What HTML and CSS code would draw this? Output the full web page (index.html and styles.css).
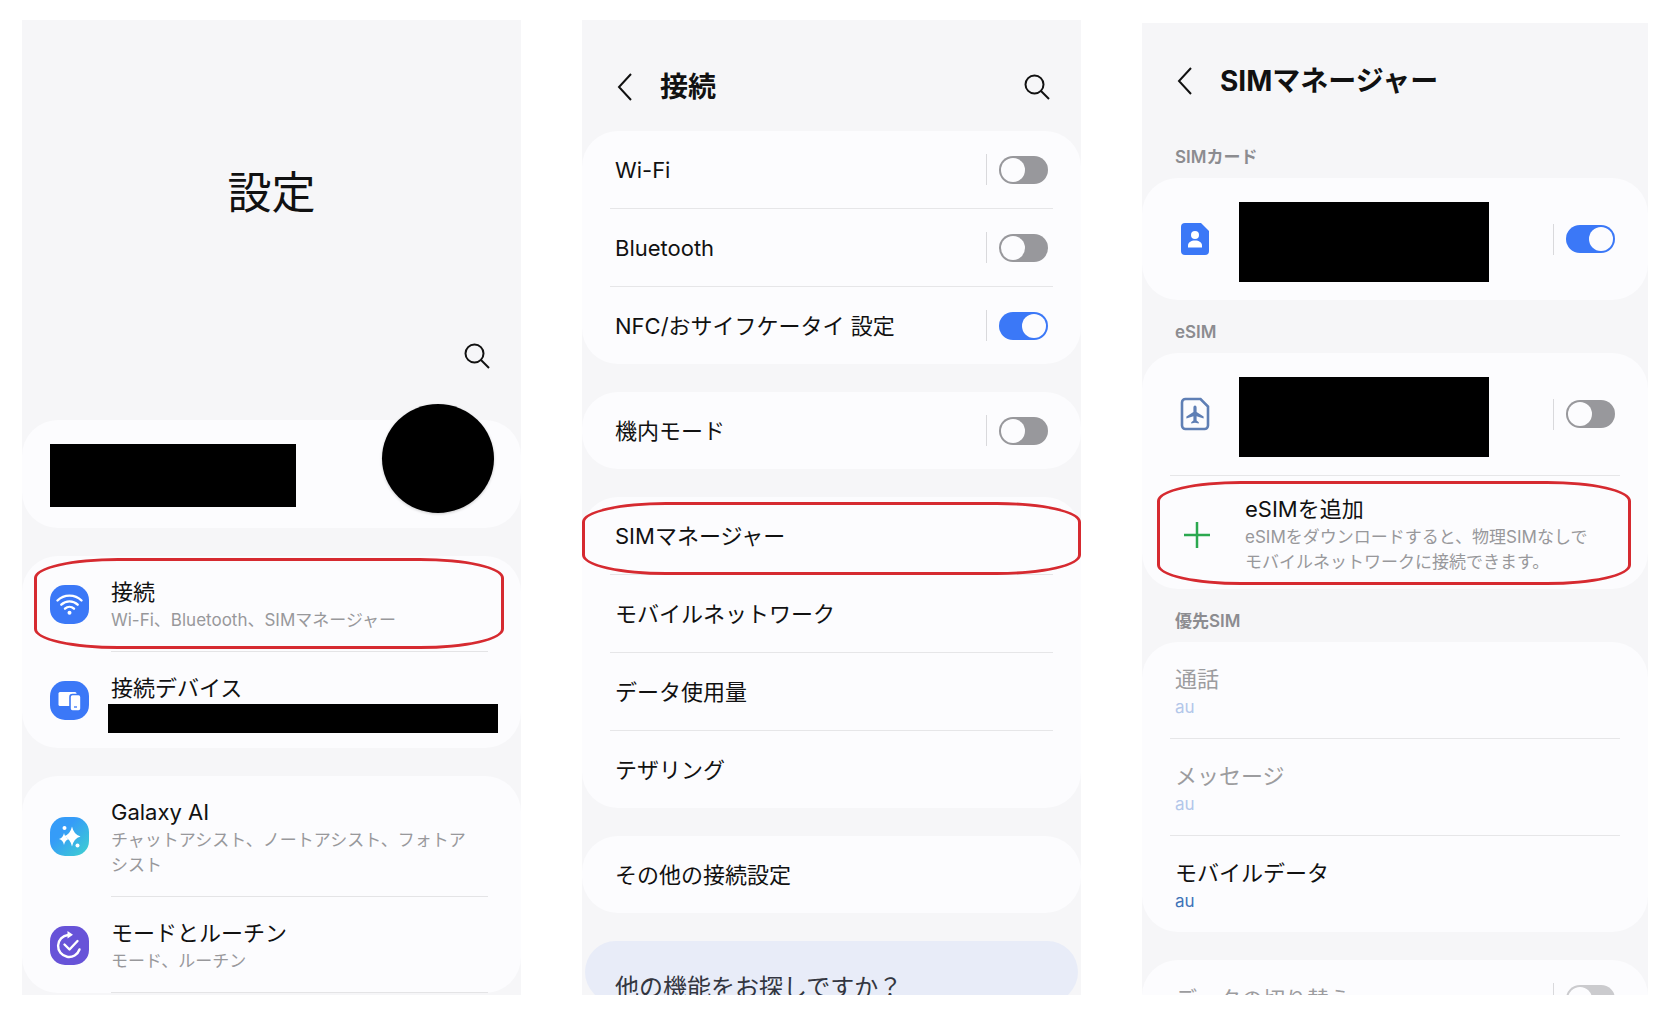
FILE: index.html
```html
<!DOCTYPE html>
<html lang="ja">
<head>
    <meta charset="UTF-8">
    <meta name="viewport" content="width=device-width, initial-scale=1">
    <title>eSIMの追加手順</title>
    <link rel="stylesheet" href="styles.css">
</head>
<body>
    <main class="steps">

        <!-- 設定 -->
        <section class="phone">
            <header class="hero">
                <h1>設定</h1>
                <button class="icon-btn" type="button" aria-label="検索">
                    <svg viewBox="0 0 28 28" width="28" height="28"><circle cx="11.500" cy="11.500" r="9" /><path d="M18 18l8 8" /></svg>
                </button>
            </header>

            <div class="card account">
                <div class="mask mask-name"></div>
                <div class="mask-avatar"></div>
            </div>

            <div class="card">
                <div class="item highlight mark-connect">
                    <svg class="app-icon" viewBox="0 0 39 39">
                        <rect width="39" height="39" rx="15" fill="#3b78f7" />
                        <g fill="none" stroke="#fff" stroke-width="2.400" stroke-linecap="round">
                            <path d="M7.500 15.500C14 9 25 9 31.500 15.500" />
                            <path d="M11.300 19.700c4.600-4.500 11.800-4.500 16.400 0" />
                            <path d="M15 23.700c2.600-2.500 6.400-2.500 9 0" />
                        </g>
                        <circle cx="19.500" cy="27.700" r="2" fill="#fff" />
                    </svg>
                    <div class="item-text">
                        <h3>接続</h3>
                        <p>Wi-Fi、Bluetooth、SIMマネージャー</p>
                    </div>
                </div>
                <div class="item item-device">
                    <svg class="app-icon" viewBox="0 0 39 39">
                        <rect width="39" height="39" rx="15" fill="#3b78f7" />
                        <rect x="8.500" y="11" width="18" height="14" rx="1.500" fill="#fff" />
                        <rect x="20" y="13.500" width="11" height="16.500" rx="2.500" fill="#fff" stroke="#3b78f7" stroke-width="1.600" />
                        <path d="M24 26h3" stroke="#3b78f7" stroke-width="1.300" />
                    </svg>
                    <div class="item-text">
                        <h3>接続デバイス</h3>
                        <div class="mask mask-device"></div>
                    </div>
                </div>
            </div>

            <div class="card">
                <div class="item">
                    <svg class="app-icon" viewBox="0 0 39 39">
                        <defs>
                            <linearGradient id="ai" x1="0" y1="0" x2="1" y2="1">
                                <stop offset="0.350" stop-color="#359cf8" />
                                <stop offset="1" stop-color="#3fd2cf" />
                            </linearGradient>
                        </defs>
                        <rect width="39" height="39" rx="15" fill="url(#ai)" />
                        <g fill="#fff">
                            <path d="M22 9.500q1.800 8.200 8.500 10-6.700 1.800-8.500 10-1.800-8.200-8.500-10 6.700-1.800 8.500-10z" />
                            <path d="M14 16q1 5 5 6-4 1-5 6-1-5-5-6 4-1 5-6z" />
                            <circle cx="14.500" cy="11" r="2" />
                            <circle cx="27.500" cy="28.500" r="2" />
                        </g>
                    </svg>
                    <div class="item-text">
                        <h3>Galaxy AI</h3>
                        <p>チャットアシスト、ノートアシスト、フォトアシスト</p>
                    </div>
                </div>
                <div class="item">
                    <svg class="app-icon" viewBox="0 0 39 39">
                        <rect width="39" height="39" rx="15" fill="#6753d8" />
                        <g fill="none" stroke="#fff" stroke-width="2.400" stroke-linecap="round" stroke-linejoin="round">
                            <path d="M29.500 23.500A11 11 0 1 1 18 9" />
                            <path d="M14.500 18.500l5 5 8-8.500" />
                        </g>
                        <path d="M17.500 5l5.500 3.800-5.500 3.700z" fill="#fff" />
                    </svg>
                    <div class="item-text">
                        <h3>モードとルーチン</h3>
                        <p>モード、ルーチン</p>
                    </div>
                </div>
            </div>
        </section>

        <!-- 接続 -->
        <section class="phone">
            <header class="bar">
                <button class="icon-btn" type="button" aria-label="戻る">
                    <svg viewBox="0 0 28 28" width="28" height="28"><path d="M21 1L9 14l12 13" /></svg>
                </button>
                <h2>接続</h2>
                <button class="icon-btn" type="button" aria-label="検索">
                    <svg viewBox="0 0 28 28" width="28" height="28"><circle cx="11.500" cy="11.500" r="9" /><path d="M18 18l8 8" /></svg>
                </button>
            </header>

            <div class="card">
                <div class="row">
                    <label for="wifi">Wi-Fi</label>
                    <span class="switch"><input type="checkbox" id="wifi"></span>
                </div>
                <div class="row">
                    <label for="bluetooth">Bluetooth</label>
                    <span class="switch"><input type="checkbox" id="bluetooth"></span>
                </div>
                <div class="row">
                    <label for="nfc">NFC/おサイフケータイ 設定</label>
                    <span class="switch"><input type="checkbox" id="nfc" checked></span>
                </div>
            </div>

            <div class="card">
                <div class="row">
                    <label for="airplane">機内モード</label>
                    <span class="switch"><input type="checkbox" id="airplane"></span>
                </div>
            </div>

            <div class="card">
                <div class="row highlight mark-manager">SIMマネージャー</div>
                <div class="row">モバイルネットワーク</div>
                <div class="row">データ使用量</div>
                <div class="row">テザリング</div>
            </div>

            <div class="card">
                <div class="row">その他の接続設定</div>
            </div>

            <div class="card suggest">
                <p>他の機能をお探しですか？</p>
            </div>
        </section>

        <!-- SIMマネージャー -->
        <section class="phone phone-sim">
            <header class="bar">
                <button class="icon-btn" type="button" aria-label="戻る">
                    <svg viewBox="0 0 28 28" width="28" height="28"><path d="M21 1L9 14l12 13" /></svg>
                </button>
                <h2>SIMマネージャー</h2>
            </header>

            <h4>SIMカード</h4>
            <div class="card">
                <div class="row row-sim">
                    <svg class="sim-icon" viewBox="0 0 30 34">
                        <path d="M5 1h16l8 8v20a4 4 0 0 1-4 4H5a4 4 0 0 1-4-4V5a4 4 0 0 1 4-4z" fill="#3b78f7" />
                        <circle cx="15" cy="13" r="4" fill="#fff" />
                        <path d="M8 25.500v-2c0-3 3-5 7-5s7 2 7 5v2z" fill="#fff" />
                    </svg>
                    <div class="mask mask-sim"></div>
                    <span class="switch"><input type="checkbox" aria-label="SIMカード" checked></span>
                </div>
            </div>

            <h4>eSIM</h4>
            <div class="card">
                <div class="row row-sim">
                    <svg class="sim-icon" viewBox="0 0 30 34">
                        <path d="M5.500 2h15l7.500 7.500V28.500a3.500 3.500 0 0 1-3.500 3.500h-19A3.500 3.500 0 0 1 2 28.500v-23A3.500 3.500 0 0 1 5.500 2z" fill="none" stroke="#5f7fb5" stroke-width="2.600" />
                        <path d="M15 8.500c1.100 0 1.600 1 1.600 2.200v4.300l7 4.400v2l-7-2.100v4.200l2.200 1.700v1.400L15 25.700l-3.800.9v-1.400l2.200-1.700v-4.200l-7 2.100v-2l7-4.400v-4.300c0-1.200.5-2.200 1.600-2.200z" fill="#5f7fb5" />
                    </svg>
                    <div class="mask mask-sim"></div>
                    <span class="switch"><input type="checkbox" aria-label="eSIM"></span>
                </div>
                <div class="row row-add highlight mark-add">
                    <svg class="plus" viewBox="0 0 26 26"><path d="M13 0v26M0 13h26" stroke="#2ba84f" stroke-width="2.500" /></svg>
                    <div>
                        <h3>eSIMを追加</h3>
                        <p>eSIMをダウンロードすると、物理SIMなしでモバイルネットワークに接続できます。</p>
                    </div>
                </div>
            </div>

            <h4>優先SIM</h4>
            <div class="card">
                <div class="row row-pref disabled">
                    <h3>通話</h3>
                    <p>au</p>
                </div>
                <div class="row row-pref disabled">
                    <h3>メッセージ</h3>
                    <p>au</p>
                </div>
                <div class="row row-pref">
                    <h3>モバイルデータ</h3>
                    <p>au</p>
                </div>
            </div>

            <div class="card">
                <div class="row disabled">
                    <label for="data-switch">データの切り替え</label>
                    <span class="switch"><input type="checkbox" id="data-switch" disabled></span>
                </div>
            </div>
        </section>

    </main>
</body>
</html>
```
FILE: styles.css
```css
* {
    box-sizing: border-box;
}
body {
    margin: 0;
    background: #fff;
    color: #111;
    font-family: Inter, "Noto Sans CJK JP", sans-serif;
    font-size: 22px;
    line-height: 30px;
}
h1, h2, h3, h4, p {
    margin: 0;
}
h3 {
    margin-bottom: 1px;
    font-size: 22px;
    font-weight: 400;
}
p {
    color: #98989b;
    font-size: 17px;
    line-height: 25px;
}
.steps {
    display: grid;
    grid-template-columns: 499fr 499fr 506fr;
    gap: 61px;
    height: 100vh;
    padding: 20px 26px 31px 22px;
}
.phone {
    min-height: 0;
    overflow: hidden;
    background: #f6f6f8;
}
.phone-sim {
    margin-top: 3px;
}

/* ヘッダー */
.hero {
    display: flex;
    flex-direction: column;
    align-items: center;
    padding: 143px 30px 50px;
}
.hero h1 {
    font-size: 44px;
    font-weight: 400;
    line-height: 60px;
}
.hero .icon-btn {
    align-self: flex-end;
    margin-top: 119px;
}
.icon-btn {
    width: 28px;
    height: 28px;
    padding: 0;
    border: none;
    background: none;
    cursor: pointer;
}
.icon-btn svg {
    display: block;
    fill: none;
    stroke: #111;
    stroke-width: 2;
}
.bar {
    display: flex;
    align-items: center;
    gap: 22px;
    padding: 43px 30px 20px 28px;
}
.bar h2 {
    flex: 1;
    font-size: 28px;
    font-weight: 700;
    line-height: 48px;
}
.phone-sim .bar {
    padding-top: 34px;
}
h4 {
    padding: 20px 33px 9px;
    color: #8c8c90;
    font-size: 17px;
    font-weight: 600;
    line-height: 24px;
}

/* カード */
.card {
    border-radius: 36px;
    background: #fcfcfe;
}
.card + .card {
    margin-top: 28px;
}
.account {
    position: relative;
    padding: 24px 28px 21px;
}
.mask {
    background: #000;
}
.mask-name {
    width: 246px;
    height: 63px;
}
.mask-avatar {
    position: absolute;
    top: -16px;
    right: 27px;
    width: 112px;
    height: 109px;
    border-radius: 50%;
    background: #000;
    box-shadow: 0 1px 3px rgba(0, 0, 0, 0.2);
}
.mask-device {
    height: 29px;
    margin: 0 -10px 0 -3px;
}
.mask-sim {
    width: 250px;
    height: 80px;
    margin: 6px 0 0 29px;
}

/* 設定の項目 */
.item {
    display: flex;
    align-items: center;
    gap: 22px;
    padding: 0 33px 0 28px;
}
.item-text {
    flex: 1;
    padding: 21px 0 18px;
    border-bottom: 1px solid #e4e4e6;
}
.item-text p {
    padding-right: 12px;
}
.item-device .item-text {
    padding-bottom: 15px;
    border-bottom: none;
}
.app-icon {
    flex: none;
    width: 39px;
    height: 39px;
}

/* 行 */
.row {
    display: flex;
    align-items: center;
    min-height: 77px;
    margin: 0 28px;
    padding: 0 5px;
}
.row + .row {
    min-height: 78px;
    border-top: 1px solid #e6e6e8;
}
.row label {
    flex: 1;
}
.switch {
    display: flex;
    align-items: center;
    height: 31px;
    margin-left: auto;
    padding-left: 12px;
    border-left: 1px solid #d9d9dc;
}
.switch input {
    appearance: none;
    width: 49px;
    height: 28px;
    margin: 0;
    padding: 2px;
    border-radius: 14px;
    background: #98989c;
    cursor: pointer;
}
.switch input::before {
    content: "";
    display: block;
    width: 24px;
    height: 24px;
    border-radius: 50%;
    background: #fcfcfe;
}
.switch input:checked {
    background: #3b78f7;
}
.switch input:checked::before {
    margin-left: auto;
}
.switch input:disabled {
    background: #cbcbce;
}
.suggest {
    margin: 0 3px;
    padding: 32px 30px 0;
    background: #e8ecf8;
}
.suggest p {
    color: #333640;
    font-size: 24px;
    line-height: 30px;
}
.row-sim {
    min-height: 122px;
}
.sim-icon {
    flex: none;
    width: 30px;
    height: 34px;
    margin-left: 5px;
}
.row-add {
    gap: 35px;
    padding: 18px 0 14px 14px;
}
.row-add p {
    padding-right: 20px;
}
.plus {
    flex: none;
    width: 26px;
    height: 26px;
}
.row-pref {
    display: block;
    padding: 22px 5px 18px;
}
.row-pref p {
    color: #3f73b8;
}
.disabled {
    color: #9c9c9f;
}
.disabled p {
    color: #b3c7ea;
}

/* 赤枠 */
.highlight {
    position: relative;
}
.highlight::after {
    content: "";
    position: absolute;
    border: 3px solid #d62a30;
    border-radius: 84px / 20px;
    pointer-events: none;
}
.mark-connect::after {
    inset: 2px 17px 3px 12px;
}
.mark-manager::after {
    inset: 5px -28px -1px;
}
.mark-add::after {
    inset: 5px -11px 4px -13px;
}
```
